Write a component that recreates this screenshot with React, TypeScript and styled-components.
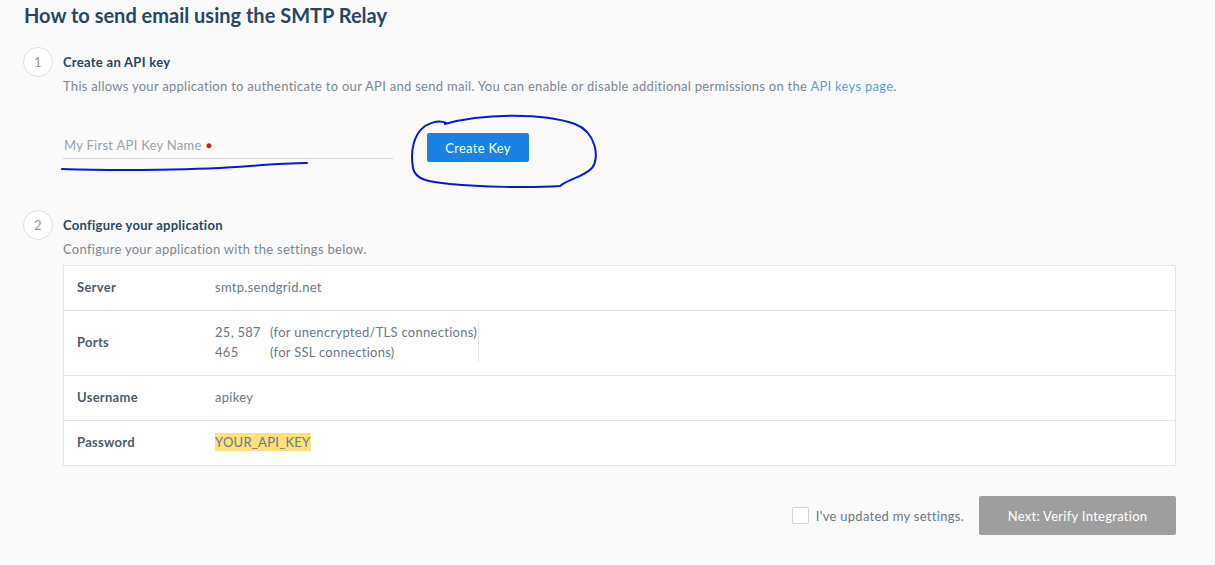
import React from "react";
import styled, { createGlobalStyle } from "styled-components";

const GlobalStyle = createGlobalStyle`
  html, body {
    margin: 0;
    padding: 0;
    background: #fafafa;
  }
  body {
    font-family: "Lato", "Liberation Sans", sans-serif;
    color: #294661;
    letter-spacing: 0.28px;
  }
`;

const Page = styled.div`
  position: relative;
  padding: 3px 39px 30px 23px;
  width: 1215px;
  box-sizing: border-box;
`;

const Title = styled.h1`
  margin: 0 0 0 1px;
  font-size: 20px;
  line-height: 24px;
  font-weight: 700;
  letter-spacing: 0;
  color: #294661;
`;

const Step = styled.section<{ $top: number }>`
  display: grid;
  grid-template-columns: 30px 1fr;
  column-gap: 10px;
  margin-top: ${(p) => p.$top}px;
`;

const Circle = styled.div`
  width: 30px;
  height: 30px;
  box-sizing: border-box;
  border: 1px solid #dcdfe3;
  border-radius: 50%;
  background: #fff;
  display: flex;
  align-items: center;
  justify-content: center;
  font-size: 13px;
  color: #8f9aa5;
`;

const StepBody = styled.div`
  min-width: 0;
`;

const StepTitle = styled.h2`
  margin: 0;
  font-size: 13px;
  line-height: 30px;
  font-weight: 700;
  color: #294661;
`;

const Description = styled.p`
  margin: 0;
  font-size: 13px;
  line-height: 18px;
  color: #7d8893;
`;

const Link = styled.a`
  color: #5a9fe3;
  text-decoration: none;
`;

const FormRow = styled.div`
  display: flex;
  align-items: flex-start;
  gap: 34px;
  margin-top: 38px;
`;

const Field = styled.div`
  width: 330px;
  height: 26px;
  box-sizing: border-box;
  border-bottom: 1px solid #d4d4d4;
  font-size: 13px;
  line-height: 25px;
  color: #9aa3ab;
  padding-left: 1px;
`;

const Required = styled.span`
  color: #c0272d;
  margin-left: 4px;
  font-size: 10px;
  vertical-align: 1px;
`;

const PrimaryButton = styled.button`
  width: 102px;
  height: 29px;
  border: 0;
  border-radius: 2px;
  background: #1a82e2;
  color: #fff;
  font-family: inherit;
  letter-spacing: inherit;
  font-size: 13px;
  padding: 0;
`;

const SettingsTable = styled.div`
  margin-top: 7px;
  background: #fff;
  border: 1px solid #e5e5e5;
`;

const Row = styled.div<{ $height: number }>`
  display: grid;
  grid-template-columns: 151px 1fr;
  align-items: center;
  height: ${(p) => p.$height}px;
  box-sizing: border-box;
  & + & {
    border-top: 1px solid #e5e5e5;
  }
`;

const Label = styled.div`
  padding-left: 13px;
  font-size: 13px;
  font-weight: 700;
  color: #4e5c6a;
  margin-top: -2px;
`;

const Value = styled.div`
  font-size: 13px;
  color: #6d7884;
  margin-top: -2px;
`;

const Ports = styled.div`
  display: grid;
  grid-template-columns: 55px auto;
  width: fit-content;
  line-height: 20px;
  border-right: 1px solid #e5e5e5;
  padding-right: 1px;
`;

const Highlight = styled.span`
  background: #fbe07c;
  padding: 1px 0;
`;

const Footer = styled.div`
  display: flex;
  justify-content: flex-end;
  align-items: center;
  margin-top: 30px;
`;

const Check = styled.label`
  display: flex;
  align-items: center;
  gap: 7px;
  font-size: 13px;
  color: #6d7884;
  margin-right: 15px;
`;

const Box = styled.span`
  width: 15px;
  height: 15px;
  border: 1px solid #d0d5da;
  border-radius: 2px;
  background: #fff;
`;

const NextButton = styled.button`
  width: 197px;
  height: 39px;
  border: 0;
  border-radius: 2px;
  background: #9e9e9e;
  color: #fff;
  font-family: inherit;
  letter-spacing: inherit;
  font-size: 13px;
  padding: 0;
`;

const Scribble = styled.svg`
  position: absolute;
  left: 0;
  top: 0;
  pointer-events: none;
`;

export default function App() {
  return (
    <>
      <GlobalStyle />
      <Page>
        <Title>How to send email using the SMTP Relay</Title>

        <Step $top={20}>
          <Circle>1</Circle>
          <StepBody>
            <StepTitle>Create an API key</StepTitle>
            <Description>
              This allows your application to authenticate to our API and send mail. You can enable or
              disable additional permissions on the <Link>API keys page</Link>.
            </Description>
            <FormRow>
              <Field>
                My First API Key Name<Required>●</Required>
              </Field>
              <PrimaryButton>Create Key</PrimaryButton>
            </FormRow>
          </StepBody>
        </Step>

        <Step $top={48}>
          <Circle>2</Circle>
          <StepBody>
            <StepTitle>Configure your application</StepTitle>
            <Description>Configure your application with the settings below.</Description>
            <SettingsTable>
              <Row $height={44}>
                <Label>Server</Label>
                <Value>smtp.sendgrid.net</Value>
              </Row>
              <Row $height={65}>
                <Label>Ports</Label>
                <Value>
                  <Ports>
                    <span>25, 587</span>
                    <span>(for unencrypted/TLS connections)</span>
                    <span>465</span>
                    <span>(for SSL connections)</span>
                  </Ports>
                </Value>
              </Row>
              <Row $height={45}>
                <Label>Username</Label>
                <Value>apikey</Value>
              </Row>
              <Row $height={45}>
                <Label>Password</Label>
                <Value>
                  <Highlight>YOUR_API_KEY</Highlight>
                </Value>
              </Row>
            </SettingsTable>
          </StepBody>
        </Step>

        <Footer>
          <Check>
            <Box />
            I've updated my settings.
          </Check>
          <NextButton>Next: Verify Integration</NextButton>
        </Footer>

        <Scribble width="1215" height="565" viewBox="0 0 1215 565">
          <path
            d="M62 169 C 120 171, 200 170, 250 166 C 275 164, 295 163, 307 163"
            fill="none"
            stroke="#0a18d6"
            strokeWidth="2"
            strokeLinecap="round"
          />
          <path
            d="M445 124 C 480 114, 540 112, 575 124 C 596 132, 600 158, 592 168 C 582 178, 570 178, 560 186 C 530 188, 480 187, 450 184 C 430 182, 415 180, 413 168 C 410 150, 414 134, 425 126 C 432 122, 440 120, 446 123"
            fill="none"
            stroke="#0a18d6"
            strokeWidth="2"
            strokeLinecap="round"
          />
        </Scribble>
      </Page>
    </>
  );
}
